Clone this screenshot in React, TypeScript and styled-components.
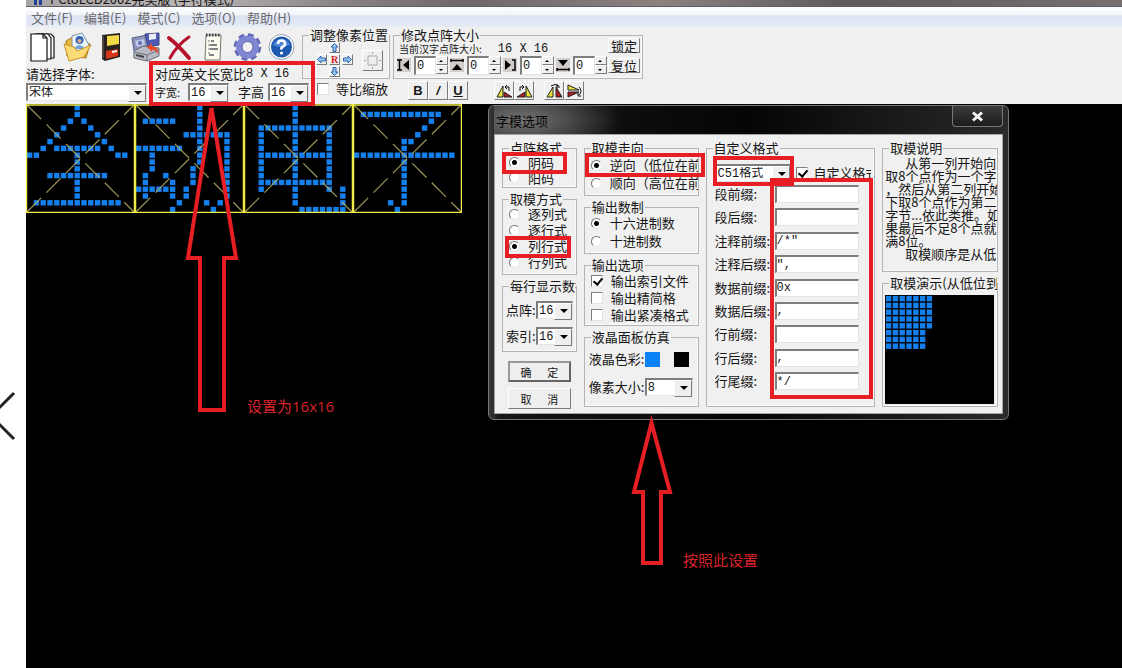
import React from "react";
import styled, { createGlobalStyle, css } from "styled-components";

const CJK = `"Noto Sans CJK SC", sans-serif`;
const MONO = `"Liberation Mono", "Noto Sans CJK SC", monospace`;
const RED = "#e81e25";
const BLUE = "#1480ee";

const GlobalStyle = createGlobalStyle`
  * { box-sizing: border-box; }
  body { margin: 0; background: #fff; font: 13px/14px ${CJK}; color: #161616; }
  button, input, select { font: inherit; color: inherit; margin: 0; padding: 0; border-radius: 0; }
`;

const Page = styled.div`
  position: relative;
  display: flex;
  min-height: 100vh;
  overflow: hidden;
`;
const SideStrip = styled.aside`
  flex: 0 0 26px;
  padding-top: 390px;
  background: #fff;
`;
const AppWindow = styled.main`
  flex: 1;
  min-width: 0;
  display: flex;
  flex-direction: column;
`;
const WindowTitle = styled.header`
  height: 7px;
  display: flex;
  align-items: flex-end;
  gap: 8px;
  padding: 0 8px;
  overflow: hidden;
  line-height: 14px;
  white-space: pre;
  background: linear-gradient(90deg, #a9a5a6 0, #b9b5b4 16%, #8c8585 28%, #6f6769 40%, #8b8280 58%, #5f5a5c 75%, #77706f 100%);
  border-bottom: 1px solid #5c5c62;
`;
const MenuBar = styled.nav`
  display: flex;
  gap: 11px;
  height: 21px;
  padding: 1px 5px 0;
  background: linear-gradient(#fbfcfe 0, #f4f6fb 35%, #dde3f2 42%, #e3e8f5 85%, #f0f0f0 100%);
`;
const MenuLink = styled.a`
  color: #6a6a6e;
  text-decoration: none;
  line-height: 20px;
`;
const Toolbar = styled.section`
  display: flex;
  align-items: flex-start;
  height: 76px;
  background: #f0f0f0;
`;
const FontColumn = styled.div`
  flex: 0 0 276px;
  width: 276px;
  min-width: 0;
  padding-top: 4px;
`;
const IconRow = styled.div`
  display: flex;
`;
const IconButton = styled.button`
  display: grid;
  place-items: center;
  width: 34px;
  height: 30px;
  border: 0;
  background: none;
`;
const FontRow = styled.div`
  display: flex;
  gap: 8px;
  padding-top: 5px;
`;
const Stack = styled.div`
  display: flex;
  flex-direction: column;
  gap: 2px;
`;
const Line = styled.div<{ $gap?: number; $h?: number }>`
  display: flex;
  align-items: center;
  gap: ${(p) => p.$gap ?? 0}px;
  ${(p) => p.$h && `height: ${p.$h}px;`}
  white-space: nowrap;
`;
const Label = styled.label<{ $small?: boolean; $w?: number }>`
  white-space: nowrap;
  font-size: ${(p) => (p.$small ? 11 : 13)}px;
  ${(p) => p.$w && `width: ${p.$w}px;`}
`;
const HeightLabel = styled(Label)`
  padding-left: 9px;
`;
const Mono = styled.span`
  font: 12px/14px ${MONO};
  white-space: pre;
`;

const sunken = css`
  border: solid;
  border-width: 2px 1px 1px 2px;
  border-color: #7e7e7e #e3e3e3 #e3e3e3 #7e7e7e;
  background: #fff;
`;
const raised = css`
  border: 1px solid;
  border-color: #fff #7b7b7b #7b7b7b #fff;
  background: #efefef;
`;

const SelectBox = styled.span<{ $w: number }>`
  position: relative;
  display: block;
  flex: none;
  width: ${(p) => p.$w}px;
  height: 18px;
  ${sunken}
  select {
    appearance: none;
    display: block;
    width: 100%;
    height: 15px;
    border: 0;
    background: none;
    font: 12px/14px ${MONO};
    padding: 1px 0 0 1px;
  }
  &::before {
    content: "";
    position: absolute;
    right: 0;
    top: 0;
    width: 16px;
    height: 15px;
    pointer-events: none;
    ${raised}
  }
  &::after {
    content: "";
    position: absolute;
    right: 4px;
    top: 6px;
    border: 4px solid transparent;
    border-top-color: #000;
    border-bottom: 0;
    pointer-events: none;
  }
`;
const Group = styled.fieldset<{ $h?: number; $px?: number; $pt?: number }>`
  min-width: 0;
  margin: 0;
  padding: ${(p) => p.$pt ?? 0}px 0 0 ${(p) => p.$px ?? 6}px;
  ${(p) => p.$h && `flex: 0 0 ${p.$h}px; height: ${p.$h}px;`}
  border: 1px solid #b4b4b4;
  box-shadow: inset -1px -1px 0 #fafafa;
`;
const Legend = styled.legend<{ $ml?: number }>`
  margin-left: ${(p) => p.$ml ?? 0}px;
  padding: 0 1px;
  max-width: calc(100% - ${(p) => Math.max(p.$ml ?? 0, 0)}px);
  height: 14px;
  overflow-x: clip;
  white-space: nowrap;
`;
const PositionColumn = styled.div`
  flex: 0 0 88px;
`;
const PositionBody = styled.div`
  display: flex;
  align-items: center;
  gap: 7px;
  padding-left: 7px;
`;
const ArrowPad = styled.div`
  display: grid;
  grid-template-columns: repeat(3, 13px);
  grid-template-rows: repeat(3, 12px);
`;
const PadButton = styled.button<{ $col: number; $row: number }>`
  grid-column: ${(p) => p.$col};
  grid-row: ${(p) => p.$row};
  width: 11px;
  height: 11px;
  ${raised}
  font: bold 10px/8px "Liberation Serif", serif;
  color: #c22;
  svg { display: block; }
`;
const CenterButton = styled.button`
  width: 21px;
  height: 21px;
  ${raised}
  svg { display: block; }
`;
const RatioLabel = styled.label`
  display: flex;
  align-items: center;
  gap: 7px;
  height: 20px;
  padding-left: 15px;
  white-space: nowrap;
`;
const Tick = styled.input.attrs({ type: "checkbox" })`
  appearance: none;
  position: relative;
  flex: none;
  width: 12px;
  height: 12px;
  ${sunken}
  border-width: 1px;
  &:checked::after {
    content: "";
    position: absolute;
    left: 3px;
    top: 0;
    width: 4px;
    height: 7px;
    border: solid #000;
    border-width: 0 2px 2px 0;
    transform: rotate(40deg);
  }
`;
const Dot = styled.input.attrs({ type: "radio" })`
  appearance: none;
  flex: none;
  width: 11px;
  height: 11px;
  border: 1px solid;
  border-color: #777 #e8e8e8 #e8e8e8 #777;
  border-radius: 50%;
  background: #fff;
  &:checked { background: radial-gradient(circle, #000 0 2px, #fff 3px); }
`;
const SizeColumn = styled.div`
  flex: 0 0 250px;
  margin-left: 3px;
`;
const SizeBody = styled.div`
  display: flex;
  justify-content: space-between;
  height: 36px;
  padding-right: 2px;
`;
const CurrentSize = styled.span`
  padding-left: 2px;
  font-size: 10px;
`;
const SizeActions = styled.div`
  margin-top: -4px;
`;
const SmallButton = styled.button`
  display: block;
  width: 32px;
  height: 15px;
  margin-bottom: 5px;
  line-height: 12px;
  ${raised}
`;
const Spinners = styled.div`
  display: flex;
  gap: 2px;
`;
const Spinner = styled.div`
  display: flex;
  align-items: center;
  width: 51px;
  height: 20px;
  svg { flex: none; margin-right: 3px; }
  input {
    flex: 1;
    min-width: 0;
    height: 19px;
    ${sunken}
    font: 12px/16px ${MONO};
    padding-left: 1px;
  }
`;
const SpinButtons = styled.div`
  display: grid;
  width: 12px;
  button {
    height: 9px;
    ${raised}
    display: grid;
    place-items: center;
  }
`;
const FormatRow = styled.div`
  display: flex;
  padding: 2px 0 0 15px;
`;
const FormatButton = styled.button<{ $ml?: number }>`
  display: grid;
  place-items: center;
  width: 20px;
  height: 19px;
  margin-left: ${(p) => p.$ml ?? 0}px;
  ${raised}
  font: bold 13px/16px "Liberation Sans", sans-serif;
`;
const Canvas = styled.section`
  flex: 1;
  display: flex;
  align-items: flex-start;
  background: #000;
  svg { display: block; flex: none; }
`;

const Dialog = styled.section`
  position: absolute;
  left: 488px;
  top: 105px;
  width: 521px;
  padding: 0 5px 5px;
  border: 1px solid #777;
  border-radius: 6px;
  background: linear-gradient(90deg, #3a3a3a 0, #161616 12px, #050505 50%, #2a2a2a 100%);
`;
const DialogTitle = styled.header`
  display: flex;
  justify-content: space-between;
  height: 28px;
  padding-left: 2px;
  background: radial-gradient(100px 38px at 28px 14px, #747474 0, #4c4c4c 45%, transparent 100%);
  color: #050505;
  h1 { margin: 0; font: 13px/30px ${CJK}; }
`;
const CloseButton = styled.button`
  display: grid;
  place-items: center;
  width: 51px;
  height: 21px;
  border: 1px solid #777;
  border-top: 0;
  border-radius: 0 0 4px 4px;
  background: linear-gradient(#3c3c3c, #1c1c1c);
`;
const DialogBody = styled.form`
  display: grid;
  grid-template-columns: 75fr 115fr 170fr 116fr;
  column-gap: 7px;
  padding: 6px 4px 4px 7px;
  border: 1px solid #a5a5a5;
  background: #f0f0f0;
`;
const Column = styled.div`
  display: flex;
  flex-direction: column;
  gap: 4px;
  min-width: 0;
`;
const Choice = styled.label<{ $h: number }>`
  display: flex;
  align-items: center;
  gap: 8px;
  height: ${(p) => p.$h}px;
  overflow-x: clip;
  white-space: nowrap;
`;
const Actions = styled.div`
  display: flex;
  flex-direction: column;
  gap: 6px;
  padding: 5px 6px 0;
`;
const ActionButton = styled.button<{ $main?: boolean }>`
  height: 21px;
  ${raised}
  font-size: 11px;
  white-space: pre;
  ${(p) => p.$main && `border-width: 2px; border-color: #999 #666 #666 #999;`}
`;
const Swatch = styled.span<{ $c: string; $ml?: number }>`
  width: 15px;
  height: 15px;
  margin-left: ${(p) => p.$ml ?? 0}px;
  background: ${(p) => p.$c};
`;
const CustomCheck = styled.label`
  display: flex;
  align-items: center;
  gap: 6px;
  width: 75px;
  overflow-x: clip;
`;
const Fields = styled.div`
  display: grid;
  align-content: space-between;
  height: 205px;
  margin-top: 3px;
`;
const Field = styled.div`
  display: flex;
  align-items: center;
  label { flex: 0 0 60px; white-space: nowrap; overflow-x: clip; }
  input {
    width: 84px;
    height: 18px;
    ${sunken}
    font: 12px/15px ${MONO};
  }
`;
const Explain = styled.div`
  height: 114px;
  overflow: hidden;
  white-space: pre;
  line-height: 13px;
  p { margin: 0; text-indent: 20px; }
`;
const Preview = styled.div`
  width: 109px;
  height: 109px;
  margin-top: 5px;
  background: #000;
  svg { display: block; }
`;
const Marks = styled.svg`
  position: absolute;
  left: 0;
  top: 0;
  pointer-events: none;
`;
const Note = styled.p<{ $x: number; $y: number }>`
  position: absolute;
  left: ${(p) => p.$x}px;
  top: ${(p) => p.$y}px;
  margin: 0;
  font: 15px/20px "Open Sans", ${CJK};
  color: #d8232a;
`;

/* Dot columns lit on each of the 16 rows; "a-b" is a run. */
const GLYPHS: string[][] = [
  ["7", "7", "6 8", "5 9", "4 10", "3 11", "2 4-10 12", "0-1 7 13-14", "7", "7", "3-11", "7", "7", "7", "1-13", ""],
  ["9", "9", "1-5 9", "9", "7-13", "9 13", "0-6 9 13", "2 9 13", "2 9 13", "2 8 13", "1 4 8 13", "1 5 8 13", "0-5 7 13", "1 5 7 13", "6 10 12", "5 11"],
  ["7", "7", "7", "2-12", "2 7 12", "2 7 12", "2 7 12", "2-12", "2 7 12", "2 7 12", "2 7 12", "2-12", "2 7 12 14", "7 14", "7 14", "8-14"],
  ["", "1-12", "11", "10", "9", "7-8", "7", "0-14", "7", "7", "7", "7", "7", "7", "5 7", "6"],
];
const PREVIEW = ["0-6", "0-6", "0-6", "0-6", "0-6", "0-5", "0-5", "0-5"];

function Dots({ rows }: { rows: string[] }) {
  const out: React.ReactNode[] = [];
  rows.forEach((row, r) =>
    row.split(" ").filter(Boolean).forEach((run) => {
      const [a, b = a] = run.split("-").map(Number);
      for (let c = a; c <= b; c++)
        out.push(<rect key={`${r}-${c}`} x={0.9 + 6.8 * c} y={0.9 + 6.8 * r} width="5.4" height="5.4" fill={BLUE} />);
    })
  );
  return <>{out}</>;
}

function GlyphCell({ rows }: { rows: string[] }) {
  return (
    <svg width="109" height="109" viewBox="0 0 109 109">
      <Dots rows={rows} />
      <path d="M1 1L108 108M1 108L108 1" stroke="#b3aa62" strokeWidth="1.2" strokeDasharray="20 7.5" opacity=".9" />
      <path d="M0 1H109M0 108.500H109M.5 0V109M108.500 0V109" stroke="#eeea45" strokeWidth="1.500" fill="none" />
    </svg>
  );
}

const TOOL_ICONS: { name: string; art: React.ReactNode }[] = [
  { name: "新建", art: <g fill="#fff" stroke="#111" strokeWidth="1.200"><path d="M9 2H22L25 5V26H9Z" /><path d="M6 2H19L22 6V27H6Z" /><path d="M2 2H14L18 6V29H2Z" /><path d="M14 2V6H18" fill="none" /></g> },
  { name: "打开", art: <g><path d="M3 9L8 6L11 8L27 12L23 26L4 24Z" fill="#e9b93c" stroke="#a9781a" /><path d="M9 4L19 1L26 13L20 21L9 19Z" fill="#eef4fb" stroke="#7d93ad" /><circle cx="16.500" cy="8" r="4" fill="#2e68ba" /><circle cx="16.500" cy="9" r="2" fill="#eda88e" /><path d="M11 17Q16 9 22 17Z" fill="#6fa6dc" /><path d="M1 12L11 15L14 19L28 13L21 25L6 29Z" fill="#fbdc74" stroke="#c79229" /></g> },
  { name: "保存", art: <g><path d="M5 3L23 1V25L8 29L5 27Z" fill="#28211d" /><path d="M10 4L22 3V12L10 14Z" fill="#f3d94a" /><path d="M9 19L21 17V24L9 27Z" fill="#d9351c" /><path d="M15 19L20 18V20L15 21Z" fill="#fff" /><path d="M6 4V26" stroke="#776c5f" /></g> },
  { name: "另存", art: <g><path d="M1 6L16 3L18 15L3 19Z" fill="#8c93b8" stroke="#5b618c" /><path d="M4 9L13 7L14 13L6 15Z" fill="#c3cbe8" /><circle cx="9" cy="11" r="2" fill="#5e6cb4" /><path d="M14 2L28 1V13L17 15Z" fill="#4d5bb5" stroke="#3a4286" /><path d="M18 2L25 1.500V7L18 8Z" fill="#e8edf8" /><path d="M3 19L12 14L28 16V24L16 29L3 26Z" fill="#b9bbc4" stroke="#666a76" /><path d="M3 20L16 23L28 18M16 23V29" stroke="#6c707c" fill="none" /><path d="M5 23L13 25" stroke="#444" strokeWidth="2" /><path d="M16 15L21 11V14Q28 15 27 22Q25 18 21 18V20Z" fill="#e9492c" /></g> },
  { name: "删除", art: <g stroke="#b5122d" strokeLinecap="round" fill="none"><path d="M4 6Q12 12 24 26" strokeWidth="4" /><path d="M24 5Q12 13 5 26" strokeWidth="3" /></g> },
  { name: "清单", art: <g><path d="M7 3H22L21 28H6Z" fill="#fbfbf0" stroke="#77786f" /><path d="M7 3H22" stroke="#444" strokeWidth="3" strokeDasharray="1.500 1.500" /><path d="M9 9H11M9 13H11M9 17H11M9 21H11" stroke="#777" strokeWidth="1" /><path d="M12 9H15M11 13H18M11 17H19M10 23H15" stroke="#555b60" strokeWidth="1.300" /></g> },
  { name: "设置", art: <g><circle cx="14.500" cy="15" r="11.500" fill="none" stroke="#6168b4" strokeWidth="4.500" strokeDasharray="5.500 3.530" /><circle cx="14.500" cy="15" r="8.500" fill="none" stroke="#7f86d2" strokeWidth="6" /><circle cx="14.500" cy="15" r="5.500" fill="#f0f0f0" stroke="#575ea8" /></g> },
  { name: "帮助", art: <g><circle cx="14.500" cy="15" r="12.500" fill="#fff" stroke="#95a2b8" /><circle cx="14.500" cy="15" r="10.500" fill="#1d57ae" /><path d="M6 13A9 9 0 0 1 23 13Q14 17 6 13Z" fill="#4c86d8" /><path d="M11 12Q11 8.500 14.500 8.500T18 12Q18 13.500 16 14.500T14.500 17.500" fill="none" stroke="#fff" strokeWidth="2.600" /><circle cx="14.500" cy="21" r="1.600" fill="#fff" /></g> },
];

const SPIN_ICONS = [
  { name: "左", d: "M0 2H5M2.500 2V12M0 12H5", t: "M12 2V12L6 7Z" },
  { name: "上", d: "M1 2.500H13M1 1V4M13 1V4", t: "M2 12H12L7 6Z" },
  { name: "右", d: "M9 2H12V12H9", t: "M2 2V12L8 7Z" },
  { name: "下", d: "M1 11.500H13M1 10V13M13 10V13", t: "M2 2H12L7 8Z" },
];

const PAD = [
  { name: "上移", col: 2, row: 1, r: 0 },
  { name: "左移", col: 1, row: 2, r: 270 },
  { name: "右移", col: 3, row: 2, r: 90 },
  { name: "下移", col: 2, row: 3, r: 180 },
];

const FIELDS: [string, string][] = [
  ["段前缀:", ""], ["段后缀:", ""], ["注释前缀:", "/*″"], ["注释后缀:", "″,"], ["数据前缀:", "0x"],
  ["数据后缀:", ","], ["行前缀:", ""], ["行后缀:", ","], ["行尾缀:", "*/"],
];

function Select({ id, value, width, label }: { id: string; value: string; width: number; label?: string }) {
  return (
    <SelectBox $w={width}>
      <select id={id} defaultValue={value} aria-label={label}><option>{value}</option></select>
    </SelectBox>
  );
}

function Radios({ name, items, picked, height }: { name: string; items: string[]; picked: string; height: number }) {
  return (
    <>
      {items.map((t) => (
        <Choice key={t} $h={height}><Dot name={name} defaultChecked={t === picked} />{t}</Choice>
      ))}
    </>
  );
}

function TransformIcon({ kind }: { kind: number }) {
  const art = [
    <g key="0"><path d="M7 3V14H1Z" fill="#e9e23c" stroke="#222" /><path d="M8 9L16 14H8Z" fill="#b01f24" stroke="#222" /><path d="M9 4H13V8M11 2L9 4L11 6" fill="none" stroke="#111" /></g>,
    <g key="1"><path d="M10 3V14H16Z" fill="#e9e23c" stroke="#222" /><path d="M9 9L1 14H9Z" fill="#b01f24" stroke="#222" /><path d="M8 4H4V8M6 2L8 4L6 6" fill="none" stroke="#111" /></g>,
    <g key="2"><path d="M7 4V14H1Z" fill="#e9e23c" stroke="#222" /><path d="M10 4V14H16Z" fill="#b01f24" stroke="#222" /><path d="M5 3Q9 0 13 3M11 1V4H14" fill="none" stroke="#111" /></g>,
    <g key="3"><path d="M2 2L13 7H2Z" fill="#e9e23c" stroke="#222" /><path d="M2 14L13 9H2Z" fill="#b01f24" stroke="#222" /><path d="M13 4Q17 8 13 12M12 10V13H15" fill="none" stroke="#111" /></g>,
  ];
  return <svg width="17" height="16">{art[kind]}</svg>;
}

function MainToolbar() {
  return (
    <Toolbar>
      <FontColumn>
        <IconRow>
          {TOOL_ICONS.map((i) => (
            <IconButton key={i.name} aria-label={i.name}><svg width="29" height="30">{i.art}</svg></IconButton>
          ))}
        </IconRow>
        <FontRow>
          <Stack>
            <Label htmlFor="font">请选择字体:</Label>
            <Select id="font" value="宋体" width={121} />
          </Stack>
          <Stack>
            <Line>对应英文长宽比<Mono>8 X 16</Mono></Line>
            <Line>
              <Label htmlFor="cw" $small $w={33}>字宽:</Label>
              <Select id="cw" value="16" width={41} />
              <HeightLabel htmlFor="ch" $w={39}>字高</HeightLabel>
              <Select id="ch" value="16" width={41} />
            </Line>
          </Stack>
        </FontRow>
      </FontColumn>
      <PositionColumn>
        <Group $h={51}>
          <Legend>调整像素位置</Legend>
          <PositionBody>
            <ArrowPad>
              {PAD.map((p) => (
                <PadButton key={p.name} type="button" aria-label={p.name} $col={p.col} $row={p.row}>
                  <svg width="9" height="9"><path transform={`rotate(${p.r} 4.500 4.500)`} d="M4.500 .5L8 4H6V8.500H3V4H1Z" fill="#8fc4f0" stroke="#164a9c" strokeWidth=".8" /></svg>
                </PadButton>
              ))}
              <PadButton type="button" $col={2} $row={2}>R</PadButton>
            </ArrowPad>
            <CenterButton type="button" aria-label="居中">
              <svg width="19" height="19"><path d="M5 5H14V14H5Z" fill="none" stroke="#aaa" /><path d="M9 2H10M9 17H10M2 9V10M17 9V10" stroke="#888" strokeWidth="1.500" /></svg>
            </CenterButton>
          </PositionBody>
        </Group>
        <RatioLabel><Tick />等比缩放</RatioLabel>
      </PositionColumn>
      <SizeColumn>
        <Group $px={3} $h={51}>
          <Legend $ml={3}>修改点阵大小</Legend>
          <SizeBody>
            <div>
              <Line $gap={16} $h={13}><CurrentSize>当前汉字点阵大小:</CurrentSize><Mono>16 X 16</Mono></Line>
              <Spinners>
                {SPIN_ICONS.map((s) => (
                  <Spinner key={s.name}>
                    <svg width="14" height="14"><path d="M0 0H14V14H0Z" fill="#d2cdca" /><path d={s.d} fill="none" stroke="#000" strokeWidth="1.500" /><path d={s.t} /></svg>
                    <input aria-label={s.name} defaultValue="0" />
                    <SpinButtons>
                      <button type="button" aria-label={s.name + "加"}><svg width="4" height="2"><path d="M0 2L2 0L4 2Z" /></svg></button>
                      <button type="button" aria-label={s.name + "减"}><svg width="4" height="2"><path d="M0 0L2 2L4 0Z" /></svg></button>
                    </SpinButtons>
                  </Spinner>
                ))}
              </Spinners>
            </div>
            <SizeActions>
              <SmallButton>锁定</SmallButton>
              <SmallButton>复位</SmallButton>
            </SizeActions>
          </SizeBody>
        </Group>
        <FormatRow>
          <FormatButton>B</FormatButton>
          <FormatButton><i>/</i></FormatButton>
          <FormatButton><u>U</u></FormatButton>
          <FormatButton aria-label="左旋" $ml={26}><TransformIcon kind={0} /></FormatButton>
          <FormatButton aria-label="右旋"><TransformIcon kind={1} /></FormatButton>
          <FormatButton aria-label="水平翻转" $ml={10}><TransformIcon kind={2} /></FormatButton>
          <FormatButton aria-label="垂直翻转"><TransformIcon kind={3} /></FormatButton>
        </FormatRow>
      </SizeColumn>
    </Toolbar>
  );
}

function OptionsDialog() {
  return (
    <Dialog role="dialog" aria-label="字模选项">
      <DialogTitle>
        <h1>字模选项</h1>
        <CloseButton aria-label="关闭">
          <svg width="13" height="11"><path d="M2 1.500L11 9.500M11 1.500L2 9.500" stroke="#f4f4f4" strokeWidth="3" /></svg>
        </CloseButton>
      </DialogTitle>
      <DialogBody>
        <Column>
          <Group $h={47}>
            <Legend>点阵格式</Legend>
            <Radios name="polarity" items={["阴码", "阳码"]} picked="阴码" height={15} />
          </Group>
          <Group $h={83}>
            <Legend>取模方式</Legend>
            <Radios name="mode" items={["逐列式", "逐行式", "列行式", "行列式"]} picked="列行式" height={16} />
          </Group>
          <Group $h={73} $px={3} $pt={4}>
            <Legend $ml={3}>每行显示数据</Legend>
            <Line $h={26}><Label htmlFor="dots" $w={30}>点阵:</Label><Select id="dots" value="16" width={37} /></Line>
            <Line $h={26}><Label htmlFor="index" $w={30}>索引:</Label><Select id="index" value="16" width={37} /></Line>
          </Group>
          <Actions>
            <ActionButton type="button" $main>{"确　  定"}</ActionButton>
            <ActionButton type="button">{"取　  消"}</ActionButton>
          </Actions>
        </Column>
        <Column>
          <Group $h={55} $pt={1}>
            <Legend>取模走向</Legend>
            <Radios name="order" items={["逆向（低位在前）", "顺向（高位在前）"]} picked="逆向（低位在前）" height={18} />
          </Group>
          <Group $h={54}>
            <Legend>输出数制</Legend>
            <Radios name="base" items={["十六进制数", "十进制数"]} picked="十六进制数" height={18} />
          </Group>
          <Group $h={68}>
            <Legend>输出选项</Legend>
            <Choice $h={17}><Tick defaultChecked />输出索引文件</Choice>
            <Choice $h={17}><Tick />输出精简格</Choice>
            <Choice $h={17}><Tick />输出紧凑格式</Choice>
          </Group>
          <Group $h={77} $px={4} $pt={1}>
            <Legend $ml={2}>液晶面板仿真</Legend>
            <Line $h={28}><Label $w={56}>液晶色彩:</Label><Swatch $c="#0a82f5" /><Swatch $c="#000" $ml={14} /></Line>
            <Line $h={28}><Label htmlFor="px" $w={56}>像素大小:</Label><Select id="px" value="8" width={48} /></Line>
          </Group>
        </Column>
        <Column>
          <Group $h={266} $px={8} $pt={8}>
            <Legend $ml={-2}>自定义格式</Legend>
            <Line $h={19} $gap={5}>
              <Select id="preset" value="C51格式" width={76} label="格式" />
              <CustomCheck><Tick defaultChecked />自定义格式</CustomCheck>
            </Line>
            <Fields>
              {FIELDS.map(([t, v], i) => (
                <Field key={t}><label htmlFor={`f${i}`}>{t}</label><input id={`f${i}`} defaultValue={v} /></Field>
              ))}
            </Fields>
          </Group>
        </Column>
        <Column>
          <Group $h={131} $px={2} $pt={1}>
            <Legend $ml={4}>取模说明</Legend>
            <Explain>
              <p>{"从第一列开始向下\n取8个点作为一个字节\n，然后从第二列开始向\n下取8个点作为第二个\n字节...依此类推。如\n果最后不足8个点就补\n满8位。"}</p>
              <p>取模顺序是从低到高</p>
            </Explain>
          </Group>
          <Group $h={131} $px={2}>
            <Legend $ml={4}>取模演示(从低位到高位)</Legend>
            <Preview><svg width="109" height="109"><Dots rows={PREVIEW} /></svg></Preview>
          </Group>
        </Column>
      </DialogBody>
    </Dialog>
  );
}

export default function App() {
  return (
    <Page>
      <GlobalStyle />
      <SideStrip>
        <svg width="26" height="52"><path d="M14 3L-9 26L14 49" fill="none" stroke="#222" strokeWidth="3" /></svg>
      </SideStrip>
      <AppWindow>
        <WindowTitle>
          <svg width="8" height="6"><path d="M0 0H3V5H0ZM5 0H8V5H5Z" fill="#23409a" /></svg>
          PCtoLCD2002完美版 (字符模式)
        </WindowTitle>
        <MenuBar>
          {["文件(F)", "编辑(E)", "模式(C)", "选项(O)", "帮助(H)"].map((m) => <MenuLink key={m} href="#">{m}</MenuLink>)}
        </MenuBar>
        <MainToolbar />
        <Canvas>
          {GLYPHS.map((g, i) => <GlyphCell key={i} rows={g} />)}
        </Canvas>
      </AppWindow>
      <OptionsDialog />
      <Marks width="1010" height="600" fill="none" stroke={RED} strokeWidth="4">
        <rect x="151" y="63" width="162" height="41" />
        <path d="M211.500 108L188 258H200V410H224V258H236Z" />
        <rect x="504" y="154" width="61" height="18" />
        <rect x="587" y="155" width="116" height="20" />
        <rect x="507" y="238" width="62" height="18" />
        <rect x="715" y="158" width="77" height="26" />
        <rect x="772" y="180" width="99" height="217" />
        <path d="M651.500 423L634 492H643V563H661V492H670Z" />
      </Marks>
      <Note $x={247} $y={396}>设置为16x16</Note>
      <Note $x={683} $y={550}>按照此设置</Note>
    </Page>
  );
}
